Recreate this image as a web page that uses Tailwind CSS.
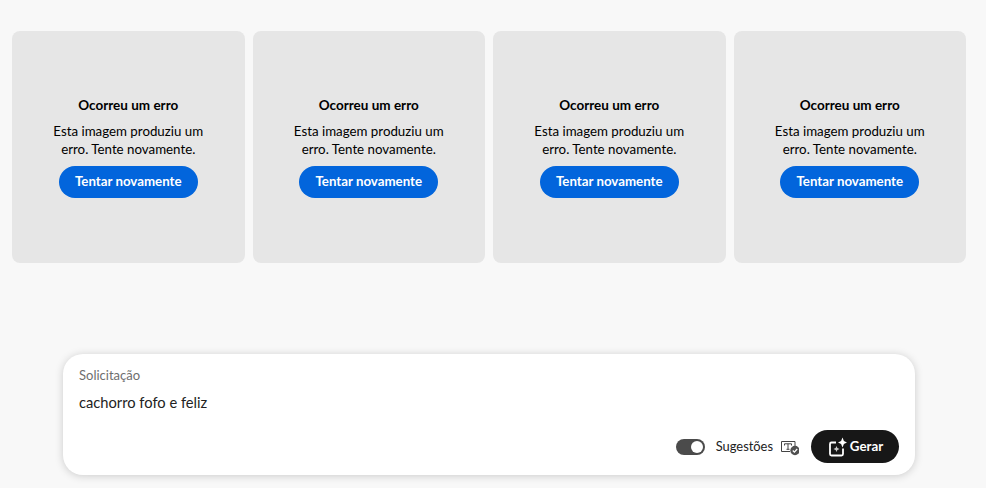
<!DOCTYPE html>
<html lang="pt-br">
<head>
  <meta charset="UTF-8">
  <meta name="viewport" content="width=device-width, initial-scale=1.0">
  <title>Gerar imagem</title>
  <script src="https://cdn.jsdelivr.net/npm/@tailwindcss/browser@4"></script>
</head>
<body class="bg-[#f8f8f8] h-[488px] overflow-hidden font-['Lato',sans-serif]">
  <div class="grid grid-cols-4 gap-2 pt-[31px] pl-3 pr-5">
    <div class="h-[232px] bg-[#e6e6e6] rounded-lg flex flex-col items-center pt-[65px]">
      <h2 class="text-[13.5px] leading-[18px] font-bold text-black">Ocorreu um erro</h2>
      <p class="mt-2 w-[170px] text-center text-[13.3px] leading-[18px] text-black">Esta imagem produziu um erro. Tente novamente.</p>
      <button class="mt-2 h-8 w-[139px] pb-[1px] rounded-full bg-[#0265dc] text-white text-[13.3px] font-bold">Tentar novamente</button>
    </div>
    <div class="h-[232px] bg-[#e6e6e6] rounded-lg flex flex-col items-center pt-[65px]">
      <h2 class="text-[13.5px] leading-[18px] font-bold text-black">Ocorreu um erro</h2>
      <p class="mt-2 w-[170px] text-center text-[13.3px] leading-[18px] text-black">Esta imagem produziu um erro. Tente novamente.</p>
      <button class="mt-2 h-8 w-[139px] pb-[1px] rounded-full bg-[#0265dc] text-white text-[13.3px] font-bold">Tentar novamente</button>
    </div>
    <div class="h-[232px] bg-[#e6e6e6] rounded-lg flex flex-col items-center pt-[65px]">
      <h2 class="text-[13.5px] leading-[18px] font-bold text-black">Ocorreu um erro</h2>
      <p class="mt-2 w-[170px] text-center text-[13.3px] leading-[18px] text-black">Esta imagem produziu um erro. Tente novamente.</p>
      <button class="mt-2 h-8 w-[139px] pb-[1px] rounded-full bg-[#0265dc] text-white text-[13.3px] font-bold">Tentar novamente</button>
    </div>
    <div class="h-[232px] bg-[#e6e6e6] rounded-lg flex flex-col items-center pt-[65px]">
      <h2 class="text-[13.5px] leading-[18px] font-bold text-black">Ocorreu um erro</h2>
      <p class="mt-2 w-[170px] text-center text-[13.3px] leading-[18px] text-black">Esta imagem produziu um erro. Tente novamente.</p>
      <button class="mt-2 h-8 w-[139px] pb-[1px] rounded-full bg-[#0265dc] text-white text-[13.3px] font-bold">Tentar novamente</button>
    </div>
  </div>

  <!-- Caixa da solicitação -->
  <div class="mt-[91px] ml-[63px] w-[852px] h-[121px] bg-white rounded-[20px] shadow-[0_1px_8px_rgba(0,0,0,0.18)] pt-3 px-4 flex flex-col">
    <label class="text-[13px] leading-[18px] text-[#6e6e6e]">Solicitação</label>
    <p class="mt-2 text-[14.7px] leading-5 text-[#222]">cachorro fofo e feliz</p>
    <div class="mt-[18px] flex items-center justify-end">
      <div class="w-[29px] h-4 rounded-full bg-[#4b4b4b] flex items-center justify-end pr-[2px]">
        <span class="w-3 h-3 rounded-full bg-white"></span>
      </div>
      <span class="ml-[11px] text-[12.9px] text-[#222]">Sugestões</span>
      <svg class="ml-2" width="18" height="18" viewBox="0 0 18 18" fill="none">
        <path d="M9 13.5H0.5V3.5H14V8" stroke="#444" stroke-width="1"/>
        <path d="M3.5 7.5V5.8H10.5V7.5M7 5.8V11.3M5.5 11.3H8.5" stroke="#444" stroke-width="1"/>
        <circle cx="14" cy="12.5" r="4.7" fill="#505050"/>
        <path d="M11.8 12.5L13.4 14.1L16.2 11" stroke="#fff" stroke-width="1.3"/>
      </svg>
      <button class="ml-3 w-[88px] h-[33px] rounded-full bg-[#171717] text-white flex items-center justify-center gap-[3px]">
        <svg width="20" height="20" viewBox="0 0 20 20" fill="none">
          <path d="M9 5.5H4.5A1.5 1.5 0 0 0 3 7V17A1.5 1.5 0 0 0 4.5 18.5H14.5A1.5 1.5 0 0 0 16 17V11.5" stroke="#fff" stroke-width="1.8"/>
          <path d="M15.5 0.5L16.9 4.1L20 5.5L16.9 6.9L15.5 10.5L14.1 6.9L11 5.5L14.1 4.1Z" fill="#fff"/>
          <path d="M9.5 9L10.4 11.1L12.5 12L10.4 12.9L9.5 15L8.6 12.9L6.5 12L8.6 11.1Z" fill="#ccc"/>
        </svg>
        <span class="text-[13.3px] font-bold">Gerar</span>
      </button>
    </div>
  </div>
</body>
</html>
